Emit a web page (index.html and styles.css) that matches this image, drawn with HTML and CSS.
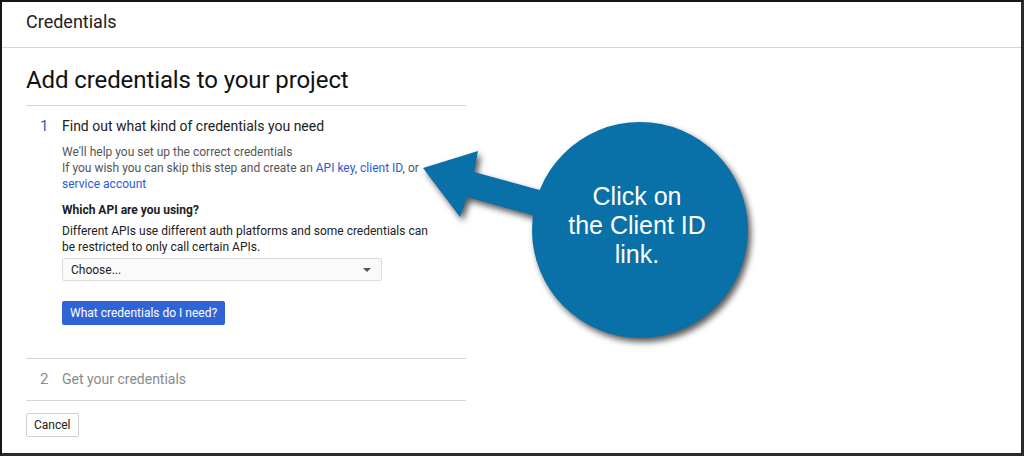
FILE: index.html
```html
<!DOCTYPE html>
<html lang="en">
<head>
<meta charset="utf-8">
<title>Credentials</title>
<link rel="stylesheet" href="styles.css">
</head>
<body>
<div class="frame">
  <header class="topbar">Credentials</header>
  <main class="content">
    <h1 class="title">Add credentials to your project</h1>
    <section class="step step-active">
      <div class="step-head"><span class="step-num">1</span><span class="step-title">Find out what kind of credentials you need</span></div>
      <div class="step-body">
        <p class="intro">We'll help you set up the correct credentials<br>If you wish you can skip this step and create an <a href="#">API key</a>, <a href="#">client ID</a>, or<br><a href="#">service account</a></p>
        <p class="q">Which API are you using?</p>
        <p class="desc">Different APIs use different auth platforms and some credentials can<br>be restricted to only call certain APIs.</p>
        <div class="select"><span>Choose...</span><span class="caret"></span></div>
        <button class="primary">What credentials do I need?</button>
      </div>
    </section>
    <section class="step step-inactive">
      <div class="step-head"><span class="step-num">2</span><span class="step-title">Get your credentials</span></div>
    </section>
    <div class="actions"><button class="secondary">Cancel</button></div>
  </main>
  <div class="callout">
    <svg class="callout-svg" width="345" height="240" viewBox="0 0 345 240">
      <polygon points="8,53 63,36 59,57 150,82 145,108 52,82 45,102" fill="#0a70a8"/>
      <circle cx="225" cy="115" r="108" fill="#0a70a8"/>
    </svg>
    <div class="callout-text">Click on<br>the Client ID<br>link.</div>
  </div>
</div>
</body>
</html>
```
FILE: styles.css
```css
* { box-sizing: border-box; }
html, body { margin: 0; padding: 0; background: #fff; }
body { font-family: Roboto, "Noto Sans", Arial, sans-serif; color: #212121; }
.frame {
  position: relative;
  width: 1024px;
  height: 456px;
  border: 2px solid #161616;
  border-right: 3px solid #2a2a2a;
  border-bottom: 3px solid #2a2a2a;
  background: #fff;
  overflow: hidden;
}
.topbar {
  height: 46px;
  padding: 0 24px;
  font-size: 18px;
  line-height: 40px;
  color: #212121;
  border-bottom: 1px solid #d6d6d6;
}
.content { padding: 16px 0 0 24px; }
.title {
  margin: 0;
  font-size: 24px;
  font-weight: 400;
  line-height: 32px;
  color: #111;
  letter-spacing: -0.1px;
}
.step { width: 440px; border-top: 1px solid #d6d6d6; }
.step-active { margin-top: 9px; padding-top: 10px; }
.step-head { display: flex; align-items: center; font-size: 14px; line-height: 20px; }
.step-num { width: 36px; padding-left: 14px; font-size: 15px; color: #2a5bd7; }
.step-title { color: #212121; }
.step-inactive { margin-top: 33px; padding: 10px 0 11px; border-bottom: 1px solid #d6d6d6; }
.step-inactive .step-num, .step-inactive .step-title { color: #8a8a8a; }
.step-body { padding-left: 36px; font-size: 12px; line-height: 16px; }
.step-body p { margin: 0; }
.intro { margin-top: 8px !important; color: #555; }
.intro a { color: #2a5bd7; text-decoration: none; }
.q { margin-top: 10px !important; font-weight: 700; color: #212121; }
.desc { margin-top: 5px !important; color: #212121; }
.select {
  margin-top: 3px;
  width: 320px;
  height: 23px;
  padding: 0 8px;
  display: flex;
  align-items: center;
  justify-content: space-between;
  border: 1px solid #dcdcdc;
  border-radius: 2px;
  background: #fafafa;
  font-size: 12px;
  color: #212121;
}
.caret {
  width: 0; height: 0;
  margin-right: 2px;
  border-left: 4px solid transparent;
  border-right: 4px solid transparent;
  border-top: 4px solid #555;
}
button { font-family: inherit; cursor: pointer; }
.primary {
  display: block;
  margin-top: 20px;
  height: 24px;
  padding: 0 8px;
  border: 0;
  border-radius: 2px;
  background: #2f64d6;
  color: #fff;
  font-size: 12px;
  line-height: 24px;
}
.actions { margin-top: 12px; }
.secondary {
  height: 24px;
  padding: 0 7px;
  border: 1px solid #d0d0d0;
  border-radius: 2px;
  background: #fff;
  color: #212121;
  font-size: 12px;
}
.callout {
  position: absolute;
  left: 413px;
  top: 113px;
  width: 345px;
  height: 240px;
}
.callout-svg { display: block; filter: drop-shadow(3px 4px 3px rgba(0,0,0,0.65)); }
.callout-text {
  position: absolute;
  left: 110px;
  top: 67px;
  width: 224px;
  text-align: center;
  font-family: "Liberation Sans", Arial, sans-serif;
  font-size: 25px;
  line-height: 29px;
  color: #fff;
}
```
